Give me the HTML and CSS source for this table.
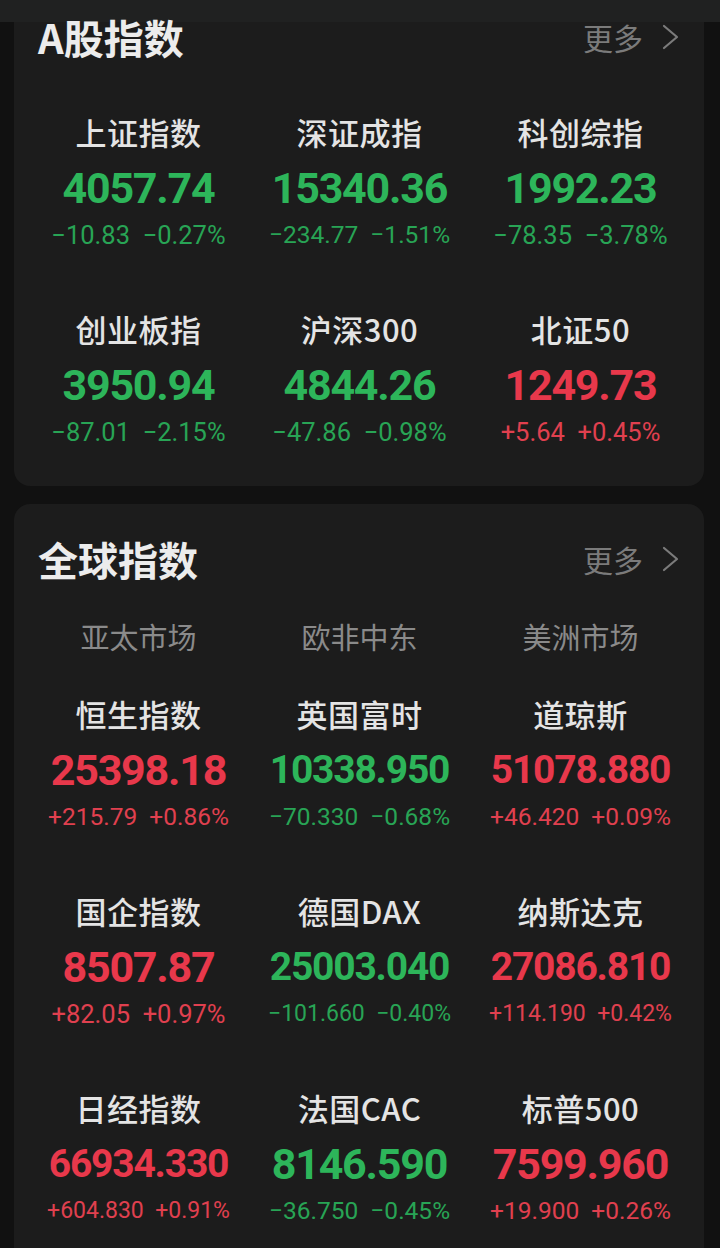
FILE: index.html
```html
<!DOCTYPE html>
<html lang="zh-CN">
<head>
<meta charset="utf-8">
<title>指数</title>
<link rel="stylesheet" href="styles.css">
</head>
<body>
<div class="topbar"></div>

<section class="card card-a">
  <div class="card-head">
    <h2 class="title">A股指数</h2>
    <div class="more">更多<svg class="chev" viewBox="0 0 18 28" width="18" height="28"><path d="M3 3 L16 14 L3 25" fill="none" stroke="#7b7b7b" stroke-width="2.2" stroke-linecap="round" stroke-linejoin="round"/></svg></div>
  </div>
  <div class="grid grid-a">
    <div class="cell down"><div class="name">上证指数</div><div class="val">4057.74</div><div class="chg">−10.83&nbsp;&nbsp;−0.27%</div></div>
    <div class="cell down"><div class="name">深证成指</div><div class="val">15340.36</div><div class="chg c14">−234.77&nbsp;&nbsp;−1.51%</div></div>
    <div class="cell down"><div class="name">科创综指</div><div class="val">1992.23</div><div class="chg">−78.35&nbsp;&nbsp;−3.78%</div></div>
    <div class="cell down"><div class="name">创业板指</div><div class="val">3950.94</div><div class="chg">−87.01&nbsp;&nbsp;−2.15%</div></div>
    <div class="cell down"><div class="name">沪深300</div><div class="val">4844.26</div><div class="chg">−47.86&nbsp;&nbsp;−0.98%</div></div>
    <div class="cell up"><div class="name">北证50</div><div class="val">1249.73</div><div class="chg">+5.64&nbsp;&nbsp;+0.45%</div></div>
  </div>
</section>

<section class="card card-b">
  <div class="card-head head-b">
    <h2 class="title">全球指数</h2>
    <div class="more">更多<svg class="chev" viewBox="0 0 18 28" width="18" height="28"><path d="M3 3 L16 14 L3 25" fill="none" stroke="#7b7b7b" stroke-width="2.2" stroke-linecap="round" stroke-linejoin="round"/></svg></div>
  </div>
  <div class="tabs">
    <div class="tab">亚太市场</div>
    <div class="tab">欧非中东</div>
    <div class="tab">美洲市场</div>
  </div>
  <div class="grid grid-b">
    <div class="cell up"><div class="name">恒生指数</div><div class="val">25398.18</div><div class="chg c14">+215.79&nbsp;&nbsp;+0.86%</div></div>
    <div class="cell down"><div class="name">英国富时</div><div class="val sm">10338.950</div><div class="chg c14">−70.330&nbsp;&nbsp;−0.68%</div></div>
    <div class="cell up"><div class="name">道琼斯</div><div class="val sm">51078.880</div><div class="chg c14">+46.420&nbsp;&nbsp;+0.09%</div></div>
    <div class="cell up"><div class="name">国企指数</div><div class="val">8507.87</div><div class="chg">+82.05&nbsp;&nbsp;+0.97%</div></div>
    <div class="cell down"><div class="name">德国DAX</div><div class="val sm">25003.040</div><div class="chg c15">−101.660&nbsp;&nbsp;−0.40%</div></div>
    <div class="cell up"><div class="name">纳斯达克</div><div class="val sm">27086.810</div><div class="chg c15">+114.190&nbsp;&nbsp;+0.42%</div></div>
    <div class="cell up"><div class="name">日经指数</div><div class="val sm">66934.330</div><div class="chg c15">+604.830&nbsp;&nbsp;+0.91%</div></div>
    <div class="cell down"><div class="name">法国CAC</div><div class="val">8146.590</div><div class="chg c14">−36.750&nbsp;&nbsp;−0.45%</div></div>
    <div class="cell up"><div class="name">标普500</div><div class="val">7599.960</div><div class="chg c14">+19.900&nbsp;&nbsp;+0.26%</div></div>
  </div>
</section>
</body>
</html>
```

FILE: styles.css
```css
* { box-sizing: border-box; }
html, body {
  margin: 0;
  padding: 0;
  background: #111111;
  width: 720px;
  height: 1248px;
  overflow: hidden;
  font-family: "Noto Sans CJK SC", "Noto Sans", sans-serif;
}
.topbar {
  height: 22px;
  background: #202121;
}
.card {
  margin: 0 16px 0 14px;
  background: #1c1c1c;
  padding: 0 13px 0 14px;
}
.card-a {
  border-radius: 0 0 16px 16px;
  padding-bottom: 39px;
}
.card-b {
  margin-top: 18px;
  border-radius: 16px 16px 0 0;
  padding-top: 32px;
  padding-bottom: 40px;
}
.card-head {
  display: flex;
  align-items: center;
  justify-content: space-between;
  height: 30px;
  margin-bottom: 2px;
  padding: 0 12px 0 10px;
}
.head-b { height: 46px; }
.title {
  margin: 0;
  font-size: 40px;
  font-weight: 700;
  color: #ececec;
  line-height: 1;
}
.more {
  display: flex;
  align-items: center;
  gap: 18px;
  font-size: 30px;
  color: #7b7b7b;
  line-height: 1;
}
.chev { display: block; }
.tabs {
  margin-top: 34px;
  display: grid;
  grid-template-columns: repeat(3, 1fr);
}
.tab {
  text-align: center;
  font-size: 29px;
  line-height: 40px;
  color: #8a8a8a;
}
.grid {
  display: grid;
  grid-template-columns: repeat(3, 1fr);
  row-gap: 57px;
}
.grid-a { margin-top: 58px; }
.grid-b { margin-top: 36px; }
.cell {
  display: flex;
  flex-direction: column;
  align-items: center;
  text-align: center;
}
.name {
  font-size: 31px;
  font-weight: 500;
  line-height: 44px;
  letter-spacing: 0.5px;
  color: #e4e4e4;
  white-space: nowrap;
}
.val {
  margin-top: 6px;
  font-family: Roboto, "Liberation Sans", sans-serif;
  font-size: 43px;
  font-weight: 700;
  line-height: 56px;
  letter-spacing: -1.2px;
  white-space: nowrap;
}
.val.sm {
  font-size: 39px;
}
.chg {
  margin-top: 4px;
  font-family: Roboto, "Liberation Sans", sans-serif;
  font-size: 25.5px;
  line-height: 30px;
  white-space: nowrap;
}
.chg.c14 { font-size: 24.5px; }
.chg.c15 { font-size: 23px; }
.down .val { color: #2db55a; }
.down .chg { color: #28a455; }
.up .val { color: #e8384b; }
.up .chg { color: #e0404f; }
```
